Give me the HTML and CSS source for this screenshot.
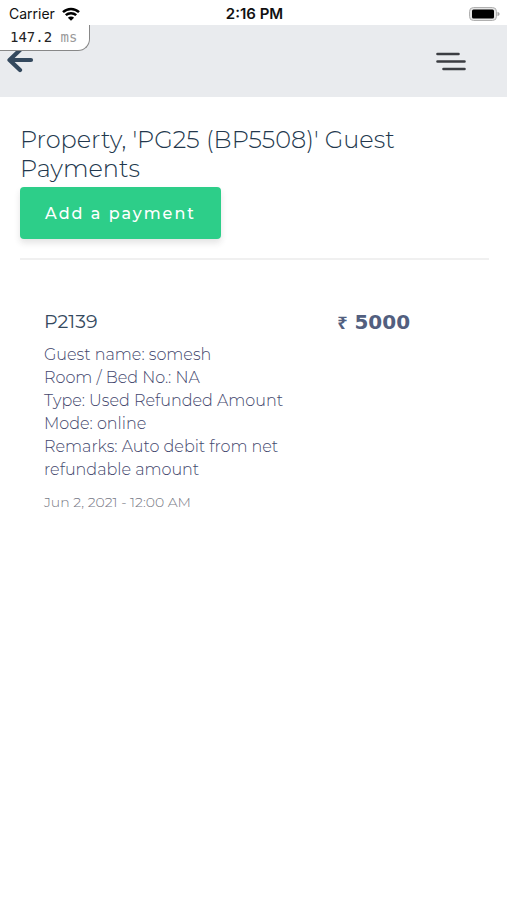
FILE: index.html
```html
<!DOCTYPE html>
<html lang="en">
<head>
<meta charset="utf-8">
<meta name="viewport" content="width=device-width, initial-scale=1">
<title>Guest Payments</title>
<link rel="stylesheet" href="styles.css">
</head>
<body>
<div class="status">
  <div class="carrier">
    <span>Carrier</span>
    <svg class="wifi" viewBox="0 0 18 14" aria-hidden="true">
      <path d="M1 5.2a11.6 11.6 0 0 1 16 0M3.8 8.2a7.6 7.6 0 0 1 10.4 0" fill="none" stroke="#000" stroke-width="2.5"/>
      <path d="M9 13.8 5.9 10.7a4.4 4.4 0 0 1 6.2 0z"/>
    </svg>
  </div>
  <time class="clock">2:16 PM</time>
  <svg class="battery" viewBox="0 0 32 14" aria-hidden="true">
    <rect x="1.5" y="0.5" width="27" height="13" rx="4" fill="#e4e4e4" stroke="#b0b0b0"/>
    <rect x="4" y="2.5" width="22" height="9" rx="1.5"/>
    <path d="M29.5 4.8q2.2 1 2.2 2.2t-2.2 2.2z" fill="#a6a6a6"/>
  </svg>
</div>
<header class="topbar">
  <button class="icon-button" type="button" aria-label="Back">
    <svg class="back" viewBox="0 0 28 26" aria-hidden="true">
      <path d="M25 12H4M14 2 3.5 12 14 22" fill="none" stroke="#34495e" stroke-width="4.2" stroke-linecap="round" stroke-linejoin="round"/>
    </svg>
  </button>
  <button class="icon-button" type="button" aria-label="Menu">
    <svg class="menu" viewBox="0 0 30 20" aria-hidden="true">
      <path d="M1.5 3h21M1.5 10.5h27M7.5 18h21" fill="none" stroke="#3b3d42" stroke-width="2.6" stroke-linecap="round"/>
    </svg>
  </button>
  <div class="timer">147.2 <span>ms</span></div>
</header>
<main>
  <h1>Property, 'PG25 (BP5508)' Guest Payments</h1>
  <button class="add" type="button">Add a payment</button>
  <hr>
  <article class="payment">
    <div class="details">
      <h2>P2139</h2>
      <p>Guest name: somesh</p>
      <p>Room / Bed No.: NA</p>
      <p>Type: Used Refunded Amount</p>
      <p>Mode: online</p>
      <p>Remarks: Auto debit from net refundable amount</p>
      <time class="date">Jun 2, 2021 - 12:00 AM</time>
    </div>
    <div class="amount"><span class="rupee">₹</span> 5000</div>
  </article>
</main>
</body>
</html>
```
FILE: styles.css
```css
* {
  box-sizing: border-box;
}

body {
  margin: 0;
  background: #fff;
  color: #43476d;
  font-family: Montserrat, Inter, sans-serif;
}

h1, h2, p {
  margin: 0;
}

button {
  border: 0;
  font: inherit;
}

.status {
  display: grid;
  grid-template-columns: 1fr auto 1fr;
  align-items: center;
  height: 25px;
  padding: 2px 7px 0 9px;
  color: #111;
  font: 14px/20px Inter, sans-serif;
}

.carrier {
  display: flex;
  align-items: center;
  gap: 7px;
}

.wifi {
  width: 18px;
  height: 14px;
}

.clock {
  font-size: 15px;
  font-weight: 600;
}

.battery {
  justify-self: end;
  width: 32px;
  height: 14px;
}

.topbar {
  position: relative;
  display: flex;
  align-items: center;
  justify-content: space-between;
  height: 72px;
  padding: 0 41px 0 6px;
  background: #e9ebee;
}

.icon-button {
  display: flex;
  padding: 0;
  background: none;
}

.back {
  width: 28px;
  height: 26px;
}

.menu {
  width: 30px;
  height: 20px;
}

.timer {
  position: absolute;
  top: 0;
  left: 0;
  height: 26px;
  padding: 0 12px 0 10px;
  border: 1px solid #888;
  border-width: 0 1px 1px 0;
  border-radius: 0 0 12px 0;
  background: #fff;
  color: #222;
  font: 14px/25px "DejaVu Sans Mono", monospace;
}

.timer span {
  color: #999;
}

main {
  padding: 28px 18px 28px 20px;
}

h1 {
  color: #23384d;
  font-size: 24px;
  font-weight: 300;
  line-height: 29px;
}

.add {
  display: block;
  height: 52px;
  margin-top: 4px;
  padding: 0 25px;
  border-radius: 4px;
  background: #2dce89;
  box-shadow: 0 4px 6px rgba(50, 50, 50, 0.13);
  color: #fff;
  font-size: 16px;
  font-weight: 500;
  letter-spacing: 2px;
}

hr {
  height: 2px;
  margin: 19px 0 0;
  border: 0;
  background: #f0f0f0;
}

.payment {
  display: grid;
  grid-template-columns: 5fr 3fr;
  padding: 48px 24px;
}

.details {
  padding-right: 16px;
  font-size: 16px;
  font-weight: 300;
  line-height: 23px;
}

h2 {
  margin-bottom: 8px;
  color: #34495e;
  font-size: 19px;
  font-weight: 400;
  line-height: 27px;
}

.date {
  display: block;
  margin-top: 10px;
  color: #777985;
  font-size: 14px;
}

.amount {
  padding-left: 30px;
  color: #525f7f;
  font-family: "DejaVu Sans", sans-serif;
  font-size: 20px;
  font-weight: 700;
  line-height: 29px;
}

.rupee {
  font-family: "Noto Sans", sans-serif;
  font-size: 18px;
}
```
